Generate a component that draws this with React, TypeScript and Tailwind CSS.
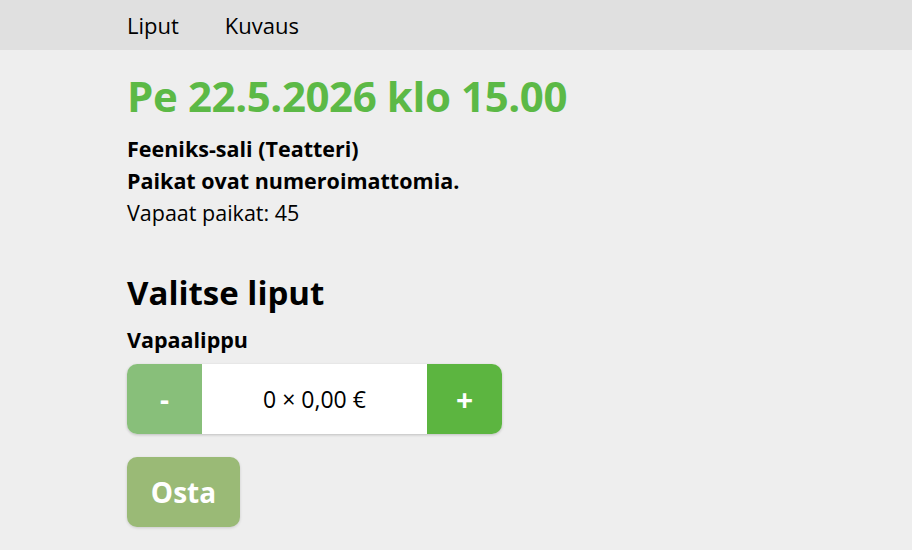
export default function App() {
  return (
    <div className="min-h-[550px] bg-[#eeeeee] text-black" style={{ fontFamily: '"Open Sans", "Noto Sans", sans-serif' }}>
      {/* Top nav */}
      <nav className="h-[50px] bg-[#e0e0e0] flex items-center pl-[127px] gap-[46px] text-[22px]">
        <span>Liput</span>
        <span>Kuvaus</span>
      </nav>

      <main className="pl-[127px] pt-[20px]">
        <h1 className="text-[42px] font-bold text-[#5cb946] leading-[52px] tracking-[-0.4px]">
          Pe 22.5.2026 klo 15.00
        </h1>
        <div className="mt-[11px] text-[21.5px] leading-[32px]">
          <div className="font-bold">Feeniks-sali (Teatteri)</div>
          <div className="font-bold">Paikat ovat numeroimattomia.</div>
          <div>Vapaat paikat: 45</div>
        </div>

        <h2 className="mt-[41px] text-[33px] font-bold leading-[46px]">Valitse liput</h2>
        <div className="mt-[10px] text-[21.5px] font-bold leading-[28px]">Vapaalippu</div>

        {/* Stepper */}
        <div className="mt-[10px] flex w-[375px] h-[70px] rounded-[10px] overflow-hidden shadow-[0_1px_3px_rgba(0,0,0,0.2)]">
          <button className="w-[75px] bg-[#88bf7a] text-white text-[28px] font-bold">-</button>
          <div className="flex-1 bg-white flex items-center justify-center text-[23px]">0 × 0,00 €</div>
          <button className="w-[75px] bg-[#5cb540] text-white text-[30px] font-bold">+</button>
        </div>

        <button className="mt-[23px] w-[113px] h-[70px] rounded-[10px] bg-[#9aba76] text-white text-[28px] font-bold shadow-[0_1px_3px_rgba(0,0,0,0.15)]">
          Osta
        </button>
      </main>
    </div>
  );
}
